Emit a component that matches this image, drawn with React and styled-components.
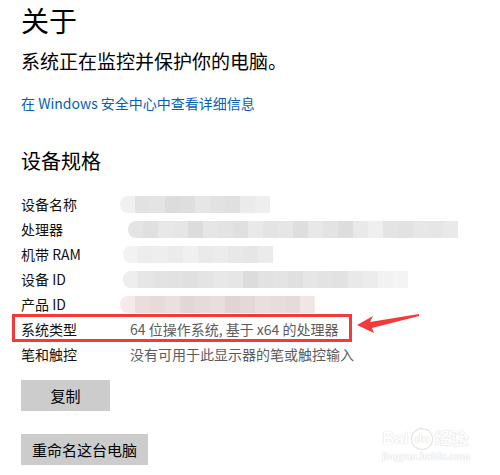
import React from "react";
import styled, { createGlobalStyle } from "styled-components";

const specs = [
  { label: "设备名称", blur: { from: -10, tone: ["#f0f0f0", "#e2e2e2", "#e4e4e4", "#dcdcdc", "#dedede", "#e6e6e6", "#e2e2e2", "#e0e0e0", "#ebebeb", "#eeeeee"] } },
  { label: "处理器", blur: { from: -2, tone: ["#e4e4e4", "#e0e0e0", "#e8e8e8", "#e6e6e6", "#dcdcdc", "#e6e6e6", "#e3e3e3", "#e0e0e0", "#e9e9e9", "#e4e4e4", "#e6e6e6", "#dedede", "#e8e8e8", "#e3e3e3", "#dddddd", "#e9e9e9", "#efefef", "#e4e4e4", "#e2e2e2", "#e7e7e7", "#e6e6e6", "#e9e9e9"] } },
  { label: "机带 RAM", blur: { from: -7, tone: ["#f2f2f2", "#ededed", "#eeeeee", "#ebebeb", "#f0f0f0", "#eaeaea", "#ececec", "#e8e8e8", "#e6e6e6", "#ebebeb"] } },
  { label: "设备 ID", blur: { from: -7, tone: ["#eeeeee", "#e6e6e6", "#e3e3e3", "#e2e2e2", "#e0e0e0", "#e4e4e4", "#e8e8e8", "#e6e6e6", "#dcdcdc", "#e2e2e2", "#e4e4e4", "#e0e0e0", "#e6e6e6", "#e3e3e3", "#e2e2e2", "#e9e9e9", "#ececec", "#f2f2f2", "#f4f4f4"] } },
  { label: "产品 ID", blur: { from: -10, tone: ["#f6eaea", "#eddcdc", "#e9dada", "#ecdfdf", "#e4d6d6", "#e7dada", "#eadddd", "#e3d3d3", "#e6d8d8", "#ecdede", "#e9dcdc", "#e8dada", "#f1e6e6"] } },
  { label: "系统类型", value: "64 位操作系统, 基于 x64 的处理器", marked: true },
  { label: "笔和触控", value: "没有可用于此显示器的笔或触控输入" },
];

const App = () => {
  return (
    <Page>
      <GlobalStyle />
      <Title>关于</Title>
      <Status>系统正在监控并保护你的电脑。</Status>
      <Link href="#">在 Windows 安全中心中查看详细信息</Link>

      <Heading>设备规格</Heading>

      <SpecList>
        {specs.map(row => (
          <SpecRow key={row.label} marked={row.marked}>
            <Label>{row.label}</Label>
            {row.value ? (
              <Value>{row.value}</Value>
            ) : (
              <Smudge style={{ marginLeft: row.blur.from }}>
                {row.blur.tone.map((c, i) => (
                  <Block key={i} style={{ background: c }} />
                ))}
              </Smudge>
            )}
            {row.marked && (
              <Arrow width="64" height="20" viewBox="0 0 64 20">
                <polygon points="0,11 16,2 13,8 62,0 62,2 15,14 17,19" fill="#f23a3a" />
              </Arrow>
            )}
          </SpecRow>
        ))}
      </SpecList>

      <Button>复制</Button>
      <Button wide>重命名这台电脑</Button>

      <Watermark>
        <Brand>
          Bai<Paw>du</Paw>经验
        </Brand>
        <Site>jingyan.baidu.com</Site>
      </Watermark>
    </Page>
  );
};

const GlobalStyle = createGlobalStyle`
  body {
    margin: 0;
    background: #ffffff;
    font-family: "Noto Sans CJK SC", "Noto Sans", sans-serif;
  }
`;

const Page = styled.div`
  position: relative;
  width: 500px;
  height: 475px;
  padding: 3px 0 0 21px;
  box-sizing: border-box;
  overflow: hidden;
  display: flex;
  flex-direction: column;
  align-items: flex-start;
`;

const Title = styled.h1`
  margin: 0;
  font-size: 28px;
  line-height: 34px;
  font-weight: 400;
  color: #000;
`;

const Status = styled.p`
  margin: 10px 0 0;
  font-size: 19px;
  line-height: 28px;
  color: #000;
`;

const Link = styled.a`
  margin-top: 18px;
  font-size: 14px;
  line-height: 20px;
  color: #0063b1;
  text-decoration: none;
`;

const Heading = styled.h2`
  margin: 34px 0 0;
  font-size: 20px;
  line-height: 28px;
  font-weight: 400;
  color: #000;
`;

const SpecList = styled.div`
  margin-top: 17px;
  display: flex;
  flex-direction: column;
`;

const SpecRow = styled.div`
  position: relative;
  display: flex;
  align-items: center;
  height: 25px;

  &::after {
    content: "";
    display: ${p => (p.marked ? "block" : "none")};
    position: absolute;
    left: -9px;
    top: -3px;
    width: 340px;
    height: 28px;
    border: 3px solid #f23a3a;
    box-sizing: border-box;
  }
`;

const Label = styled.span`
  width: 109px;
  flex-shrink: 0;
  font-size: 14px;
  line-height: 25px;
  color: #111;
`;

const Value = styled.span`
  font-size: 14px;
  line-height: 25px;
  color: #5c5c5c;
`;

const Smudge = styled.div`
  display: flex;
  height: 17px;
  border-radius: 8px 0 0 8px;
  overflow: hidden;
`;

const Block = styled.span`
  width: 15px;
  height: 100%;
`;

const Arrow = styled.svg`
  position: absolute;
  left: 336px;
  top: -3px;
`;

const Button = styled.button`
  margin-top: ${p => (p.wide ? "23px" : "13px")};
  min-width: 89px;
  height: 31px;
  padding: 0 ${p => (p.wide ? "11px" : "20px")};
  border: none;
  background: #cccccc;
  color: #000;
  font-family: "Noto Sans CJK SC", sans-serif;
  font-size: 15px;
`;

const Watermark = styled.div`
  position: absolute;
  left: 382px;
  top: 428px;
  display: flex;
  flex-direction: column;
  align-items: center;
  color: #ffffff;
  text-shadow: 0 0 1px #d8d8d8, 0 0 1px #d8d8d8;
  font-family: "Liberation Sans", sans-serif;
`;

const Brand = styled.div`
  font-size: 17px;
  font-weight: 700;
  line-height: 20px;
  display: flex;
  align-items: center;
`;

const Paw = styled.span`
  font-size: 12px;
  margin: 0 2px;
  padding: 0 3px;
  border-radius: 50%;
  border: 1px solid #e0e0e0;
`;

const Site = styled.div`
  font-size: 10px;
  line-height: 14px;
  font-weight: 700;
`;

export default App;
